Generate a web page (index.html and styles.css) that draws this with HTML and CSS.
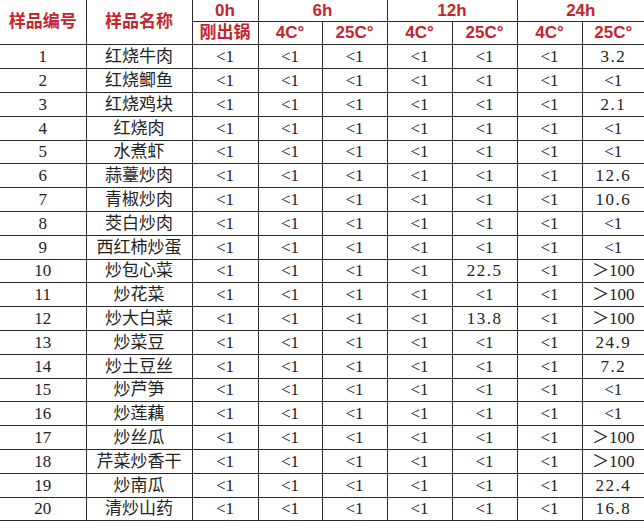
FILE: index.html
```html
<!DOCTYPE html>
<html lang="zh">
<head>
<meta charset="utf-8">
<link rel="stylesheet" href="styles.css">
</head>
<body>
<table class="data">
<colgroup>
<col class="c-id"><col class="c-name"><col class="c-0"><col class="c-a"><col class="c-b"><col class="c-b"><col class="c-b"><col class="c-c"><col class="c-d">
</colgroup>
<thead>
<tr class="h1">
<th rowspan="2" class="first">样品编号</th>
<th rowspan="2">样品名称</th>
<th>0h</th>
<th colspan="2">6h</th>
<th colspan="2">12h</th>
<th colspan="2" class="last">24h</th>
</tr>
<tr class="h2">
<th>刚出锅</th>
<th>4C°</th>
<th>25C°</th>
<th>4C°</th>
<th>25C°</th>
<th>4C°</th>
<th class="last">25C°</th>
</tr>
</thead>
<tbody>
<tr><td class="first">1</td><td>红烧牛肉</td><td>&lt;1</td><td>&lt;1</td><td>&lt;1</td><td>&lt;1</td><td>&lt;1</td><td>&lt;1</td><td class="last dec">3.2</td></tr>
<tr><td class="first">2</td><td>红烧鲫鱼</td><td>&lt;1</td><td>&lt;1</td><td>&lt;1</td><td>&lt;1</td><td>&lt;1</td><td>&lt;1</td><td class="last">&lt;1</td></tr>
<tr><td class="first">3</td><td>红烧鸡块</td><td>&lt;1</td><td>&lt;1</td><td>&lt;1</td><td>&lt;1</td><td>&lt;1</td><td>&lt;1</td><td class="last dec">2.1</td></tr>
<tr><td class="first">4</td><td>红烧肉</td><td>&lt;1</td><td>&lt;1</td><td>&lt;1</td><td>&lt;1</td><td>&lt;1</td><td>&lt;1</td><td class="last">&lt;1</td></tr>
<tr><td class="first">5</td><td>水煮虾</td><td>&lt;1</td><td>&lt;1</td><td>&lt;1</td><td>&lt;1</td><td>&lt;1</td><td>&lt;1</td><td class="last">&lt;1</td></tr>
<tr><td class="first">6</td><td>蒜薹炒肉</td><td>&lt;1</td><td>&lt;1</td><td>&lt;1</td><td>&lt;1</td><td>&lt;1</td><td>&lt;1</td><td class="last dec">12.6</td></tr>
<tr><td class="first">7</td><td>青椒炒肉</td><td>&lt;1</td><td>&lt;1</td><td>&lt;1</td><td>&lt;1</td><td>&lt;1</td><td>&lt;1</td><td class="last dec">10.6</td></tr>
<tr><td class="first">8</td><td>茭白炒肉</td><td>&lt;1</td><td>&lt;1</td><td>&lt;1</td><td>&lt;1</td><td>&lt;1</td><td>&lt;1</td><td class="last">&lt;1</td></tr>
<tr><td class="first">9</td><td>西红柿炒蛋</td><td>&lt;1</td><td>&lt;1</td><td>&lt;1</td><td>&lt;1</td><td>&lt;1</td><td>&lt;1</td><td class="last">&lt;1</td></tr>
<tr><td class="first">10</td><td>炒包心菜</td><td>&lt;1</td><td>&lt;1</td><td>&lt;1</td><td>&lt;1</td><td class="dec">22.5</td><td>&lt;1</td><td class="last">＞100</td></tr>
<tr><td class="first">11</td><td>炒花菜</td><td>&lt;1</td><td>&lt;1</td><td>&lt;1</td><td>&lt;1</td><td>&lt;1</td><td>&lt;1</td><td class="last">＞100</td></tr>
<tr><td class="first">12</td><td>炒大白菜</td><td>&lt;1</td><td>&lt;1</td><td>&lt;1</td><td>&lt;1</td><td class="dec">13.8</td><td>&lt;1</td><td class="last">＞100</td></tr>
<tr><td class="first">13</td><td>炒菜豆</td><td>&lt;1</td><td>&lt;1</td><td>&lt;1</td><td>&lt;1</td><td>&lt;1</td><td>&lt;1</td><td class="last dec">24.9</td></tr>
<tr><td class="first">14</td><td>炒土豆丝</td><td>&lt;1</td><td>&lt;1</td><td>&lt;1</td><td>&lt;1</td><td>&lt;1</td><td>&lt;1</td><td class="last dec">7.2</td></tr>
<tr><td class="first">15</td><td>炒芦笋</td><td>&lt;1</td><td>&lt;1</td><td>&lt;1</td><td>&lt;1</td><td>&lt;1</td><td>&lt;1</td><td class="last">&lt;1</td></tr>
<tr><td class="first">16</td><td>炒莲藕</td><td>&lt;1</td><td>&lt;1</td><td>&lt;1</td><td>&lt;1</td><td>&lt;1</td><td>&lt;1</td><td class="last">&lt;1</td></tr>
<tr><td class="first">17</td><td>炒丝瓜</td><td>&lt;1</td><td>&lt;1</td><td>&lt;1</td><td>&lt;1</td><td>&lt;1</td><td>&lt;1</td><td class="last">＞100</td></tr>
<tr><td class="first">18</td><td>芹菜炒香干</td><td>&lt;1</td><td>&lt;1</td><td>&lt;1</td><td>&lt;1</td><td>&lt;1</td><td>&lt;1</td><td class="last">＞100</td></tr>
<tr><td class="first">19</td><td>炒南瓜</td><td>&lt;1</td><td>&lt;1</td><td>&lt;1</td><td>&lt;1</td><td>&lt;1</td><td>&lt;1</td><td class="last dec">22.4</td></tr>
<tr><td class="first">20</td><td>清炒山药</td><td>&lt;1</td><td>&lt;1</td><td>&lt;1</td><td>&lt;1</td><td>&lt;1</td><td>&lt;1</td><td class="last dec">16.8</td></tr>
</tbody>
</table>
</body>
</html>
```
FILE: styles.css
```css
html, body {
  margin: 0;
  padding: 0;
  background: #ffffff;
}

.data {
  border-collapse: collapse;
  table-layout: fixed;
  width: 644px;
}

.c-id { width: 86px; }
.c-name { width: 106px; }
.c-0 { width: 66px; }
.c-a { width: 64px; }
.c-b { width: 65px; }
.c-c { width: 65px; }
.c-d { width: 62px; }

.data th,
.data td {
  border: 1px solid #2a2a2a;
  padding: 0;
  text-align: center;
  vertical-align: middle;
  white-space: nowrap;
  overflow: hidden;
}

.data th {
  color: #c3262d;
  font-family: "Liberation Sans", "Noto Sans CJK SC", sans-serif;
  font-weight: bold;
  font-size: 17px;
  line-height: 20px;
}

.data .h1 th { height: 21px; border-top: none; }
.data .h2 th { height: 22px; }

.data td {
  color: #222222;
  font-family: "Liberation Serif", "Noto Sans CJK SC", serif;
  font-size: 17px;
  line-height: 20px;
  height: 23px;
}

.data td.dec { letter-spacing: 1.5px; }

.data tbody tr:nth-child(5n) td { height: 22px; }

.data .first { border-left: none; }
.data .last { border-right: none; }
```
